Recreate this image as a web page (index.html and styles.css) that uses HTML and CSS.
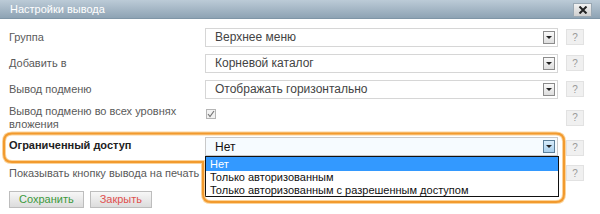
FILE: index.html
```html
<!DOCTYPE html>
<html lang="ru">
<head>
<meta charset="utf-8">
<title>Настройки вывода</title>
<link rel="stylesheet" href="styles.css">
</head>
<body>
<div class="dialog">
  <div class="titlebar">
    <span class="title">Настройки вывода</span>
    <span class="close"><svg width="10" height="8" viewBox="0 0 10 8"><path d="M1.5 0.5 L8.5 7.5 M8.5 0.5 L1.5 7.5" stroke="#222" stroke-width="2"/></svg></span>
  </div>
  <div class="body">
    <div class="row r26">
      <div class="label">Группа</div>
      <div class="select"><span class="val">Верхнее меню</span><span class="arrow"></span></div>
      <span class="help">?</span>
    </div>
    <div class="row r26">
      <div class="label">Добавить в</div>
      <div class="select"><span class="val">Корневой каталог</span><span class="arrow"></span></div>
      <span class="help">?</span>
    </div>
    <div class="row r26">
      <div class="label">Вывод подменю</div>
      <div class="select"><span class="val">Отображать горизонтально</span><span class="arrow"></span></div>
      <span class="help">?</span>
    </div>
    <div class="row r31">
      <div class="label">Вывод подменю во всех уровнях<br>вложения</div>
      <div class="cbcell"><span class="checkbox"><svg width="8" height="8" viewBox="0 0 8 8"><path d="M1 4 L3 6.5 L7 1" stroke="#777" stroke-width="1.2" fill="none"/></svg></span></div>
      <span class="help">?</span>
    </div>
    <div class="row r29 focusrow">
      <div class="label bold">Ограниченный доступ</div>
      <div class="select focused"><span class="val">Нет</span><span class="arrow"></span>
        <ul class="list">
          <li class="sel">Нет</li>
          <li>Только авторизованным</li>
          <li>Только авторизованным с разрешенным доступом</li>
        </ul>
      </div>
      <span class="help">?</span>
    </div>
    <div class="row r22">
      <div class="label">Показывать кнопку вывода на печать</div>
      <div class="cbcell"></div>
      <span class="help">?</span>
    </div>
    <div class="buttons">
      <span class="btn save">Сохранить</span>
      <span class="btn closebtn">Закрыть</span>
    </div>
  </div>
  <svg class="highlight" width="600" height="214" viewBox="0 0 600 214">
    <path d="M12 133.5 H556 Q564 133.5 564 141.5 V194 Q564 202 556 202 H211 Q203 202 203 194 V162 H12 Q4 162 4 154 V141.5 Q4 133.5 12 133.5 Z" fill="none" stroke="#fbd39a" stroke-width="4"/>
    <path d="M12 133.5 H556 Q564 133.5 564 141.5 V194 Q564 202 556 202 H211 Q203 202 203 194 V162 H12 Q4 162 4 154 V141.5 Q4 133.5 12 133.5 Z" fill="none" stroke="#f29a2e" stroke-width="2"/>
  </svg>
</div>
</body>
</html>
```

FILE: styles.css
```css
* { box-sizing: border-box; }
html, body { margin: 0; padding: 0; background: #fff; }
body { width: 600px; height: 214px; overflow: hidden; font-family: "Liberation Sans", Arial, sans-serif; }

.dialog { position: relative; width: 600px; height: 214px; background: #fff; }

.titlebar {
  height: 19px;
  display: flex;
  align-items: center;
  justify-content: space-between;
  padding: 0 8px 0 10px;
  background: linear-gradient(#bccbd7, #8ea3b4);
  border-bottom: 1px solid #7f95a6;
}
.title { color: #fff; font-size: 11px; }
.close {
  width: 19px; height: 14px;
  display: flex; align-items: center; justify-content: center;
  background: linear-gradient(#f2f2f2, #cfcfcf);
  border: 1px solid #9aa8b3;
  margin-top: 2px;
}

.body { padding: 5px 0 0 0; }

.row {
  display: grid;
  grid-template-columns: 197px 353px 18px;
  column-gap: 8px;
  align-items: center;
}
.r26 { height: 26px; }
.r31 { height: 31px; }
.r29 { height: 29px; }
.r22 { height: 22px; }

.label {
  padding-left: 9px;
  font-size: 11px;
  line-height: 13px;
  color: #5a5a5a;
  white-space: nowrap;
}
.label.bold { font-weight: bold; color: #222; align-self: start; padding-top: 6px; }

.select {
  position: relative;
  height: 19px;
  border: 1px solid #d6d6d6;
  background: #fff;
  display: flex;
  align-items: center;
  justify-content: space-between;
  padding: 0 2px 0 9px;
}
.val { font-size: 12px; color: #444; }
.arrow {
  width: 12px; height: 13px;
  border: 1px solid #8c8c8c;
  background: linear-gradient(#fafafa, #dedede);
  position: relative;
}
.arrow::after {
  content: "";
  position: absolute;
  left: 2px; top: 4px;
  border-left: 3px solid transparent;
  border-right: 3px solid transparent;
  border-top: 3px solid #222;
}

.focused { background: #f6fbff; border-color: #c9c9c9; margin-top: 4px; align-self: start; }
.focused .val { color: #111; }
.focused .arrow { background: linear-gradient(#d8ecfb, #a9d0ee); border-color: #5c7f99; }

.list {
  position: absolute;
  left: -1px; top: 18px;
  width: 354px;
  margin: 0; padding: 0;
  list-style: none;
  background: #fff;
  border: 1px solid #111;
  z-index: 2;
}
.list li {
  height: 12.6px;
  line-height: 13px;
  font-size: 11px;
  color: #111;
  padding-left: 4px;
  white-space: nowrap;
}
.list li.sel { background: #3399ff; color: #fff; height: 14px; line-height: 14px; }

.cbcell { height: 19px; display: flex; align-items: center; }
.checkbox {
  width: 10px; height: 10px;
  margin-left: 1px;
  margin-top: -8px;
  border: 1px solid #b5b5b5;
  background: #f2f2f2;
  display: flex; align-items: center; justify-content: center;
}

.help {
  width: 18px; height: 16px;
  border: 1px solid #e2e2e2;
  background: #f0f0f0;
  color: #9a9a9a;
  font-size: 10px;
  display: flex; align-items: center; justify-content: center;
}

.buttons {
  display: flex;
  gap: 6px;
  padding: 7px 0 0 9px;
}
.btn {
  height: 17px;
  padding: 0 9px;
  font-size: 11px;
  line-height: 15px;
  border: 1px solid #bdbdbd;
  background: linear-gradient(#f7f7f7, #dcdcdc);
}
.save { color: #3c9a3c; }
.closebtn { color: #e05050; }

.highlight { position: absolute; left: 0; top: 0; pointer-events: none; z-index: 3; }
```
